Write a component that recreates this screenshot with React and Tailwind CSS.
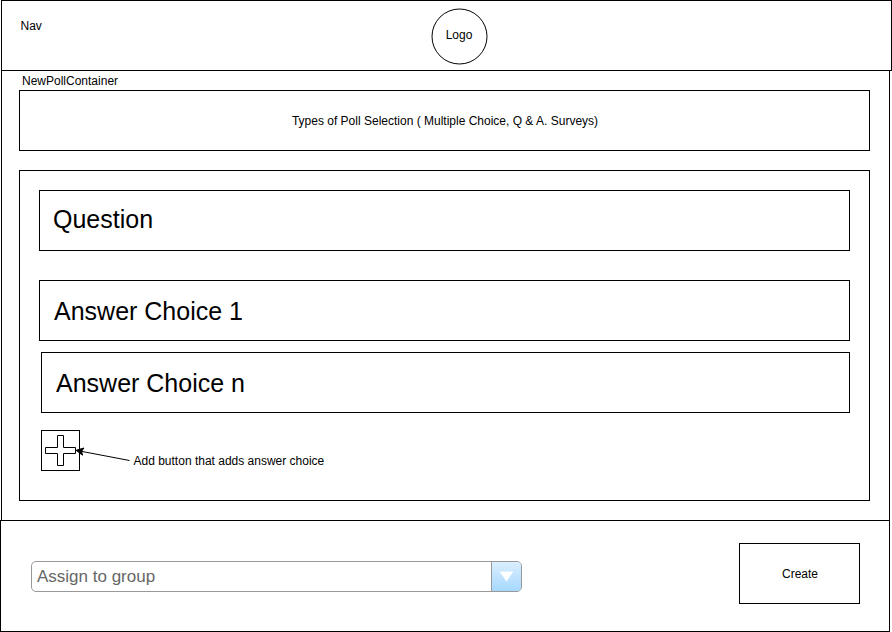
function Nav() {
  return (
    <nav className="ml-px flex h-[71px] w-[891px] items-start border border-black">
      <span className="mt-[18px] w-[429px] pl-[18.5px] leading-[14px]">Nav</span>
      <div className="relative mt-[7px] flex size-[57px] items-center justify-center">
        <svg className="absolute inset-0" width="57" height="57" viewBox="0 0 57 57" fill="none" stroke="#000">
          <circle cx="28.5" cy="28.5" r="27.5" />
        </svg>
        <span className="mt-[-3px] pr-px leading-[14px]">Logo</span>
      </div>
    </nav>
  );
}

function AddIcon() {
  return (
    <svg className="shrink-0" width="90" height="41" viewBox="0 0 90 41" fill="none" stroke="#000">
      <rect x="0.5" y="0.5" width="38" height="40" />
      <path d="M4.5 17.5h12v-12h6v12h12v6h-12v12h-6v-12h-12z" />
      <path d="M88.5 30.5 40.7 21.4" />
      <path d="M35.1 20.3 42.9 18 40.6 21.3 41.5 25.2z" fill="#000" />
    </svg>
  );
}

function NewPollContainer() {
  return (
    <main className="ml-px flex h-[449px] w-[889px] flex-col border-x border-black pl-[17px]">
      <span className="ml-[3px] mt-[3px] leading-[14px]">NewPollContainer</span>
      <section className="mt-[2px] flex h-[61px] w-[851px] items-center justify-center border border-black">
        <span className="pl-px leading-[14px]">Types of Poll Selection ( Multiple Choice, Q &amp; A. Surveys)</span>
      </section>
      <section className="mt-[19px] flex h-[331px] w-[851px] flex-col border border-black pl-[19px] pt-[19px] text-[25px]">
        <div className="h-[61px] w-[811px] border border-black pl-[13px] pt-[14px] leading-[29px]">Question</div>
        <div className="mt-[29px] h-[61px] w-[811px] border border-black pl-[14px] pt-[16px] leading-[29px]">Answer Choice 1</div>
        <div className="ml-[2px] mt-[11px] h-[61px] w-[809px] border border-black pl-[14px] pt-[16px] leading-[29px]">Answer Choice n</div>
        <div className="ml-[2px] mt-[17px] flex text-[12px]">
          <AddIcon />
          <span className="ml-[2.5px] mt-[24px] leading-[14px]">Add button that adds answer choice</span>
        </div>
      </section>
    </main>
  );
}

function GroupSelect() {
  return (
    <div className="flex h-[31px] w-[491px] overflow-hidden rounded-[5px] border border-[#999999] text-[17px] text-[#666666]">
      <span className="w-[459px] pl-[5px] pt-[5px] leading-[19px]">Assign to group</span>
      <div className="flex flex-1 items-center justify-center border-l border-[#999999] bg-linear-to-b from-[#dbeeff] to-[#a5d8ff]">
        <svg width="15" height="11" viewBox="0 0 15 11" fill="#fff">
          <path d="M0.5 0.5h14l-7 10z" />
        </svg>
      </div>
    </div>
  );
}

export default function App() {
  return (
    <div className="h-[632px] w-[892px] overflow-hidden bg-white font-['Liberation_Sans',Arial,sans-serif] text-[12px] text-black">
      <Nav />
      <NewPollContainer />
      <footer className="flex h-[112px] w-[890px] items-start justify-between border border-black pl-[30px] pr-[29px]">
        <div className="pt-[40px]">
          <GroupSelect />
        </div>
        <button className="mt-[22px] h-[61px] w-[121px] border border-black pl-px">Create</button>
      </footer>
    </div>
  );
}
